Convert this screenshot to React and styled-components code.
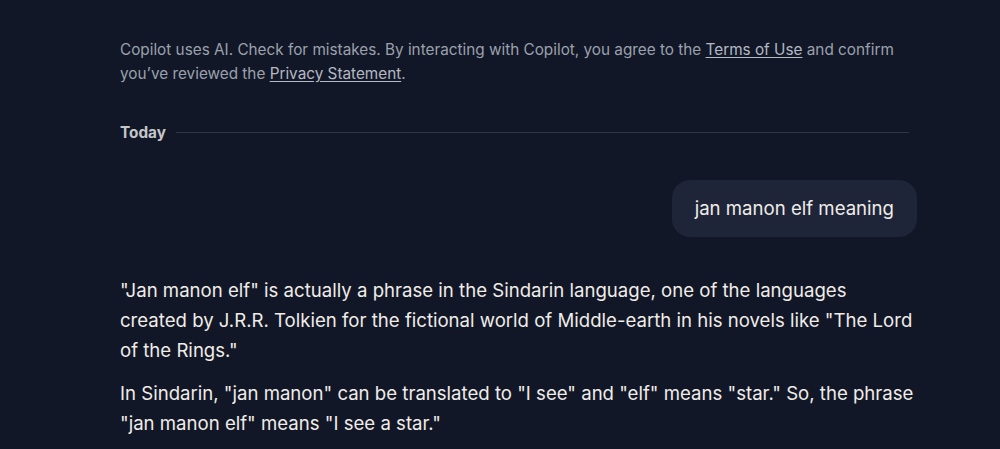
import React from 'react';
import styled, { createGlobalStyle } from 'styled-components';

const Global = createGlobalStyle`
  html, body {
    margin: 0;
    padding: 0;
    background: #111726;
  }
  body {
    font-family: Inter, "Noto Sans", sans-serif;
    -webkit-font-smoothing: antialiased;
  }
`;

const Page = styled.div`
  width: 1000px;
  height: 449px;
  overflow: hidden;
  background: #111726;
  display: flex;
  justify-content: flex-start;
  padding-left: 120px;
  box-sizing: border-box;
`;

const Column = styled.div`
  width: 798px;
  padding-top: 38px;
  display: flex;
  flex-direction: column;
`;

const Disclaimer = styled.p`
  margin: 0;
  font-size: 15.3px;
  line-height: 24px;
  color: #9ba1ad;
  padding-right: 10px;

  a {
    color: #b4b9c3;
    text-decoration: underline;
    text-underline-offset: 2px;
  }
`;

const DayRow = styled.div`
  display: flex;
  align-items: center;
  gap: 10px;
  margin-top: 37px;
  padding-right: 9px;
`;

const DayLabel = styled.span`
  font-size: 15.3px;
  font-weight: 700;
  color: #c5c6ca;
`;

const Rule = styled.div`
  flex: 1;
  height: 1px;
  background: #2f3646;
`;

const UserRow = styled.div`
  display: flex;
  justify-content: flex-end;
  margin-top: 38px;
  padding-right: 1px;
`;

const Bubble = styled.div`
  background: #1e2538;
  border-radius: 18px;
  padding: 15px 23px 15px;
  font-size: 18.6px;
  line-height: 27px;
  color: #f0ece8;
`;

const Answer = styled.div`
  margin-top: 38px;
`;

const Para = styled.p`
  margin: 0 0 13px;
  font-size: 18.6px;
  line-height: 30px;
  color: #f0ece8;
`;

export default function App() {
  return (
    <>
      <Global />
      <Page>
        <Column>
          <Disclaimer>
            Copilot uses AI. Check for mistakes. By interacting with Copilot, you agree to the{' '}
            <a href="#">Terms of Use</a> and confirm you’ve reviewed the{' '}
            <a href="#">Privacy Statement</a>.
          </Disclaimer>
          <DayRow>
            <DayLabel>Today</DayLabel>
            <Rule />
          </DayRow>
          <UserRow>
            <Bubble>jan manon elf meaning</Bubble>
          </UserRow>
          <Answer>
            <Para>
              "Jan manon elf" is actually a phrase in the Sindarin language, one of the languages
              <br />
              created by J.R.R. Tolkien for the fictional world of Middle-earth in his novels like
              "The Lord
              <br />
              of the Rings."
            </Para>
            <Para>
              In Sindarin, "jan manon" can be translated to "I see" and "elf" means "star." So, the
              phrase "jan manon elf" means "I see a star."
            </Para>
          </Answer>
        </Column>
      </Page>
    </>
  );
}
